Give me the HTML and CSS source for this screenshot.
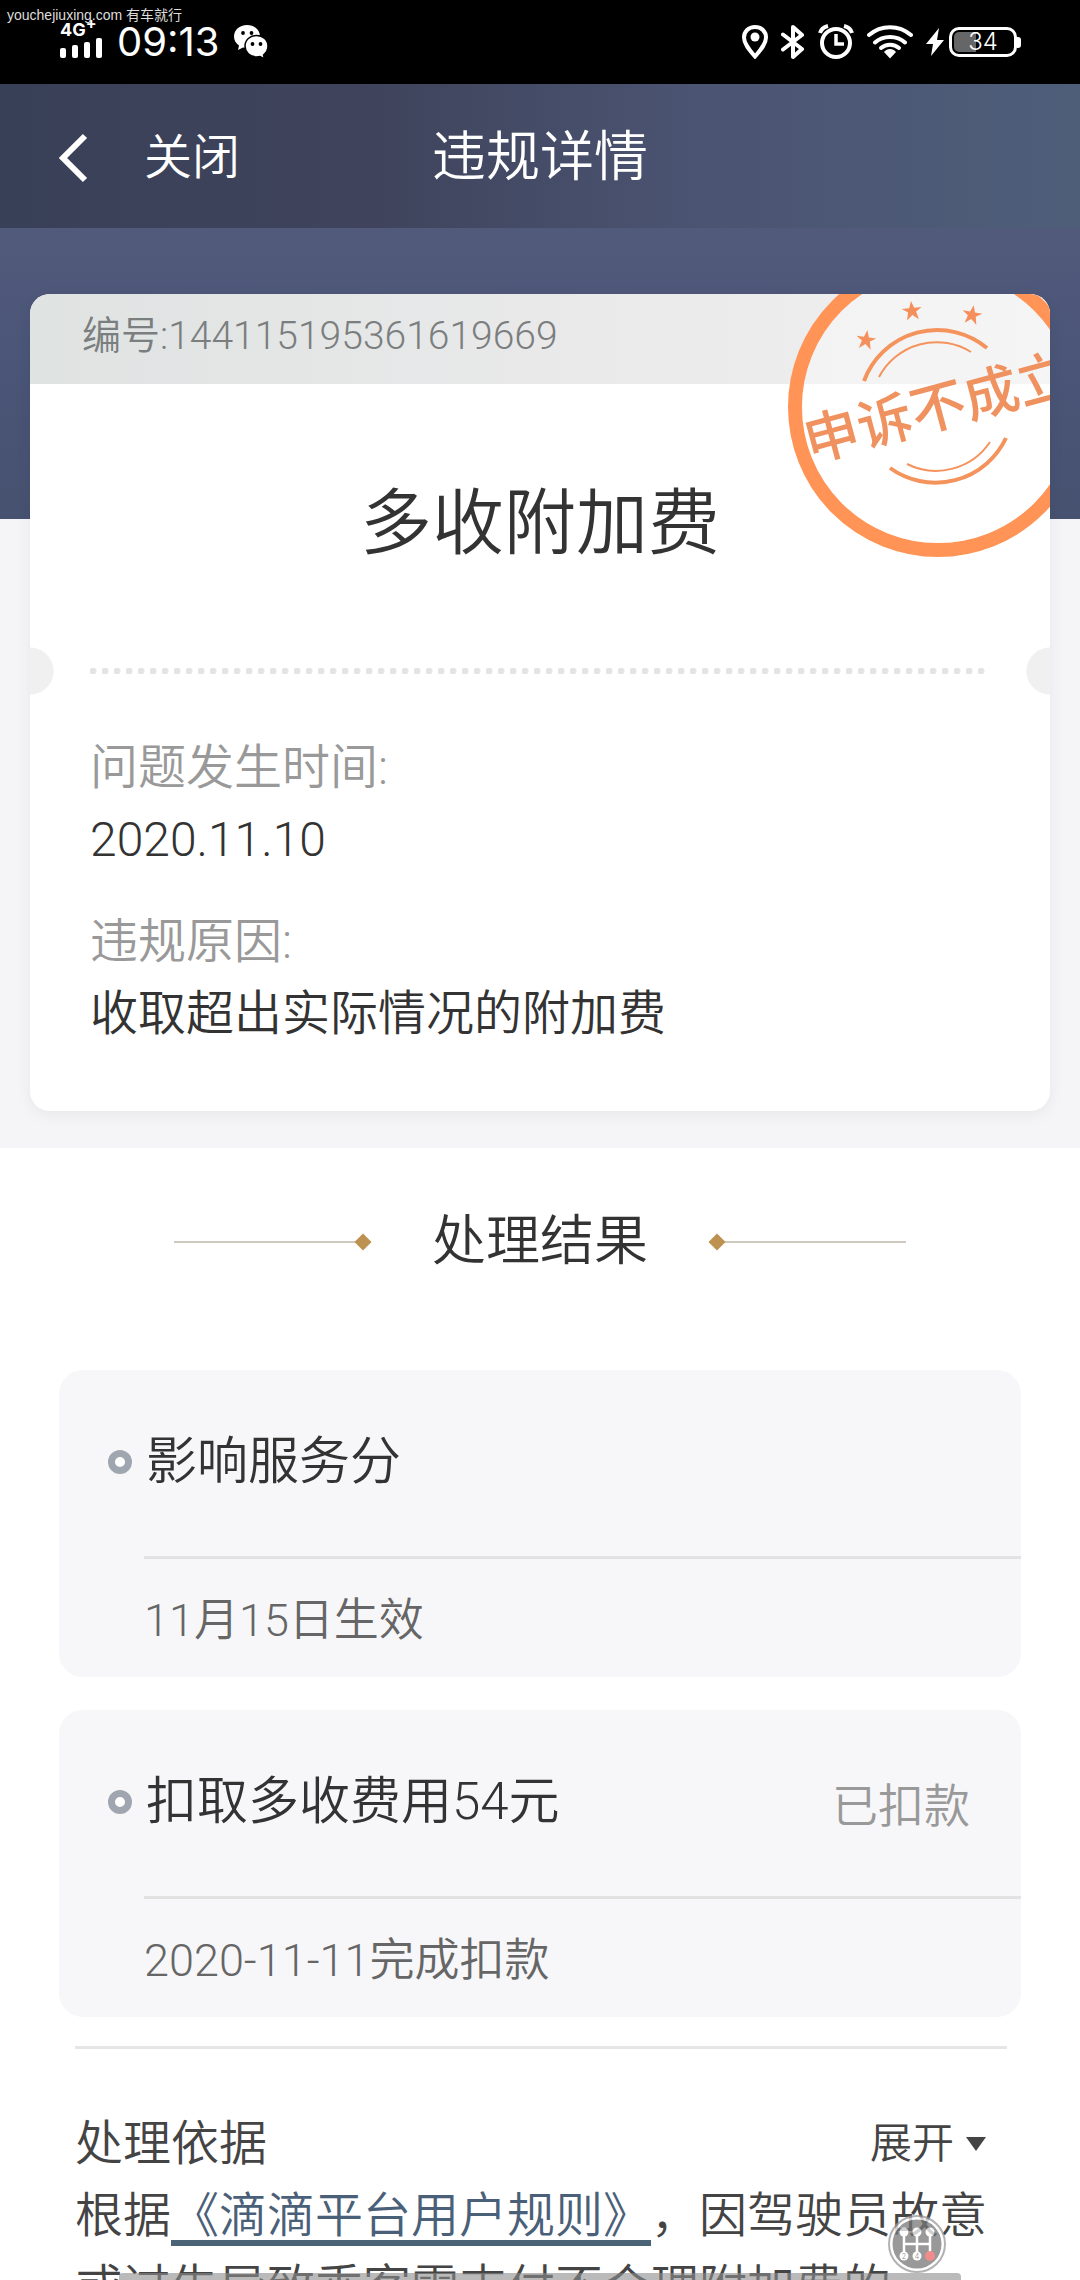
FILE: index.html
```html
<!DOCTYPE html>
<html lang="zh-CN">
<head>
<meta charset="utf-8">
<meta name="viewport" content="width=device-width, initial-scale=1">
<title>违规详情</title>
<link rel="stylesheet" href="styles.css">
</head>
<body>
<div class="screen">
  <div class="watermark">youchejiuxing.com 有车就行</div>
  <div class="status">
    <div class="status-group">
      <div class="signal">
        <span class="network">4G<sup>+</sup></span>
        <svg width="43" height="20" viewBox="0 0 43 20" fill="#fff" aria-hidden="true"><rect y="10" width="6" height="10" rx="2"/><rect x="12" y="7" width="6" height="13" rx="2"/><rect x="24" y="4" width="6" height="16" rx="2"/><rect x="36" width="6" height="20" rx="2"/></svg>
      </div>
      <time class="clock">09:13</time>
      <svg width="34" height="34" viewBox="0 0 34 34" aria-hidden="true"><path d="M13 0C5.500 0 0 5 0 11.500c0 4 2 7 5 9L4 25l5-2.500 4 .8c7 0 13-5 13-11.800S20 0 13 0z" fill="#fff"/><circle cx="9" cy="8" r="1.900"/><circle cx="17.500" cy="8" r="1.900"/><path d="M22.500 10.500C16 10.500 11 15 11 21s5 11 11.500 11l3.500-.5 4.500 2.500-1-4c2.500-2 4.500-5 4.500-9 0-6-5-10.500-11.500-10.500z" fill="#fff" stroke="#000" stroke-width="1.500"/><circle cx="18.500" cy="19" r="1.900"/><circle cx="26.500" cy="19" r="1.900"/></svg>
    </div>
    <div class="status-group status-right">
      <svg width="26" height="34" viewBox="0 0 26 34" aria-hidden="true"><path d="M13 2C6.500 2 2 6.500 2 12.500 2 19 7.500 25 13 31.500 18.500 25 24 19 24 12.500 24 6.500 19.500 2 13 2z" fill="none" stroke="#fff" stroke-width="4"/><circle cx="13" cy="12" r="4.500" fill="#fff"/></svg>
      <svg width="24" height="36" viewBox="0 0 24 36" fill="none" stroke="#fff" stroke-width="4" stroke-linejoin="round" stroke-linecap="round" aria-hidden="true"><path d="M2 10.500L21 25l-9 8V3l9 8L2 25.500"/></svg>
      <svg width="36" height="36" viewBox="0 0 36 36" fill="none" stroke="#fff" stroke-width="4" aria-hidden="true"><circle cx="18" cy="19" r="14"/><path d="M18 10v10h8" stroke-width="3.500"/><path d="M2 9c1-3.500 4-6 8-7M34 9c-1-3.500-4-6-8-7"/></svg>
      <svg width="46" height="34" viewBox="0 0 46 34" fill="none" stroke="#fff" stroke-width="4" stroke-linecap="round" aria-hidden="true"><path d="M2 10C14-.5 32-.5 44 10M8 17.500c8-7.500 22-7.500 30 0"/><path d="M14 23c5-4.500 13-4.500 18 0"/><path d="M17 27c3-4 9-4 12 0l-6 6.500z" fill="#fff" stroke="none"/></svg>
      <svg class="bolt" width="18" height="28" viewBox="0 0 18 28" fill="#fff" aria-hidden="true"><path d="M13 0L0 16h7L5 28l13-16h-7z"/></svg>
      <div class="battery"><span class="battery-level">34</span></div>
    </div>
  </div>

  <header class="nav">
    <div class="nav-actions">
      <button class="back" type="button" aria-label="返回"><svg width="30" height="50" viewBox="0 0 30 50" fill="none" stroke="#fff" stroke-width="6" aria-hidden="true"><path d="M27 3L5 25l22 22"/></svg></button>
      <button class="close" type="button">关闭</button>
    </div>
    <h1 class="nav-title">违规详情</h1>
  </header>

  <main>
    <section class="hero">
      <article class="ticket">
        <div class="ticket-number">编号:144115195361619669</div>
        <svg class="stamp" width="302" height="302" viewBox="787 256 302 302" aria-hidden="true">
          <circle cx="938" cy="407" r="143" fill="none" stroke="#ff9456" stroke-width="14"/>
          <circle cx="938" cy="407" r="136" fill="#fff" fill-opacity=".35"/>
          <g fill="none" stroke="#f5935c" stroke-width="4">
            <path d="M864 381A78 78 0 0 1 987 348M890 468A78 78 0 0 0 1006 438"/>
            <path d="M879 377A65 65 0 0 1 971 352M907 464A65 65 0 0 0 990 442" stroke-width="2"/>
          </g>
          <g fill="#f5905c">
            <path transform="translate(866 340) rotate(8)" d="M0-10l2.500 7H10L4 1l2 8-6-5-6 5 2-8-6-4h7.500z"/>
            <path transform="translate(912 311) rotate(-6)" d="M0-10l2.500 7H10L4 1l2 8-6-5-6 5 2-8-6-4h7.500z"/>
            <path transform="translate(972 315) rotate(10)" d="M0-10l2.500 7H10L4 1l2 8-6-5-6 5 2-8-6-4h7.500z"/>
          </g>
          <text class="stamp-text" x="938" y="427" text-anchor="middle" transform="rotate(-15 938 407)">申诉不成立</text>
        </svg>
        <h2 class="ticket-title">多收附加费</h2>
        <div class="perforation"><span class="dots"></span></div>
        <dl class="details">
          <div><dt>问题发生时间:</dt><dd>2020.11.10</dd></div>
          <div><dt>违规原因:</dt><dd>收取超出实际情况的附加费</dd></div>
        </dl>
      </article>
    </section>

    <section class="results">
      <div class="section-heading">
        <span class="rule rule-left"></span>
        <h2>处理结果</h2>
        <span class="rule rule-right"></span>
      </div>
      <ul class="result-list">
        <li class="result">
          <div class="result-head"><span class="ring"></span><h3>影响服务分</h3></div>
          <p class="result-note">11月15日生效</p>
        </li>
        <li class="result">
          <div class="result-head"><span class="ring"></span><h3>扣取多收费用54元</h3><span class="result-state">已扣款</span></div>
          <p class="result-note">2020-11-11完成扣款</p>
        </li>
      </ul>
    </section>

    <section class="basis">
      <div class="basis-head">
        <h2>处理依据</h2>
        <button class="expand" type="button">展开<svg width="20" height="14" viewBox="0 0 20 14" fill="#444" aria-hidden="true"><path d="M0 0h20L10 14z"/></svg></button>
      </div>
      <p class="basis-text">根据<a href="#rules">《滴滴平台用户规则》</a>，因驾驶员故意或过失导致乘客需支付不合理附加费的</p>
    </section>
  </main>

  <div class="gear-badge">
    <svg width="60" height="60" viewBox="0 0 60 60" aria-hidden="true"><circle cx="30" cy="30" r="28" fill="#fff" stroke="#999" stroke-width="2"/><circle cx="30" cy="30" r="24.500" fill="#777"/><path d="M17 20v19M30 20v19M43 20v19M17 30h26" fill="none" stroke="#fff" stroke-width="2.500"/><g fill="#fff"><circle cx="17" cy="18" r="4.500"/><circle cx="30" cy="18" r="4.500"/><circle cx="43" cy="18" r="4.500"/><circle cx="17" cy="42" r="4.500"/><circle cx="30" cy="42" r="4.500"/></g><circle cx="43" cy="42" r="5" fill="#e66"/><g font-family="Inter, sans-serif" font-size="7" text-anchor="middle" fill="#666"><text x="17" y="45">2</text><text x="30" y="45">4</text></g></svg>
  </div>
  <div class="gesture-bar"></div>
</div>
</body>
</html>
```

FILE: styles.css
```css
* { box-sizing: border-box; }

body {
  margin: 0;
  background: #fff;
  color: #333;
  font-family: Roboto, "Noto Sans CJK SC", sans-serif;
  font-weight: 350;
  text-spacing-trim: space-all;
}

h1, h2, h3, p, dl, dd, ul { margin: 0; padding: 0; font-weight: inherit; }
button { border: 0; padding: 0; background: none; color: inherit; font: inherit; }
svg { display: block; }

.screen { position: relative; height: 100vh; overflow: hidden; }

.watermark {
  position: absolute;
  left: 7px;
  top: 5px;
  color: #ddd;
  font: 14px/20px "Liberation Sans", "Noto Sans CJK SC", sans-serif;
}

/* Phone status bar */
.status {
  display: flex;
  justify-content: space-between;
  height: 84px;
  padding: 0 63px 0 60px;
  background: #000;
  color: #fff;
  font-family: Inter, sans-serif;
}
.status-group { display: flex; align-items: center; gap: 14px; }
.signal { margin-bottom: 4px; }
.network { display: block; height: 16px; font-size: 18px; font-weight: 700; line-height: 16px; }
.network sup { font-size: 16px; line-height: 0; }
.clock { font-size: 40px; line-height: 88px; font-weight: 400; }
.status-right { gap: 13px; }
.bolt { margin-right: -8px; }
.battery {
  position: relative;
  width: 68px;
  height: 30px;
  border: 3px solid #fff;
  border-radius: 10px;
  background: linear-gradient(90deg, #666 22px, #000 22px) content-box;
  padding: 2px;
  font-size: 24px;
  line-height: 20px;
  text-align: center;
}
.battery::after {
  content: "";
  position: absolute;
  right: -7px;
  top: 7px;
  width: 4px;
  height: 11px;
  border-radius: 0 3px 3px 0;
  background: #fff;
}

/* Title bar */
.nav {
  display: grid;
  grid-template-columns: 1fr auto 1fr;
  align-items: center;
  height: 144px;
  padding: 4px 58px 0;
  background: linear-gradient(90deg, #384058, #3f445c 35%, #4b5472 65%, #4e5e79);
  color: #fff;
}
.nav-actions { display: flex; align-items: center; gap: 56px; }
.close { font-size: 48px; line-height: 72px; }
.nav-title { grid-column: 2; font-size: 54px; line-height: 80px; }

/* Violation ticket */
.hero {
  padding: 66px 30px 37px;
  background: linear-gradient(#525a7b, #4a5577 50%, #475170) 0 0 / 100% 291px no-repeat #f5f5f7;
}
.ticket {
  position: relative;
  overflow: hidden;
  border-radius: 20px;
  background: #fff;
  box-shadow: 0 4px 16px rgba(0, 0, 0, .06);
}
.ticket-number {
  height: 90px;
  padding-left: 52px;
  background: linear-gradient(90deg, #dfe3e2, #e9e9ea 50%, #f0f0f1);
  color: #7b7e7e;
  font-size: 39px;
  line-height: 84px;
}
.stamp { position: absolute; right: -39px; top: -38px; }
.stamp-text { fill: #ef925f; font-size: 55px; font-weight: 500; }
.ticket-title {
  padding: 100px 0 83px;
  font-size: 72px;
  line-height: 80px;
  text-align: center;
}
.perforation {
  display: flex;
  align-items: center;
  height: 48px;
  padding: 0 60px;
  background:
    radial-gradient(circle at 0 50%, #f0f0f1 23px, transparent 24px),
    radial-gradient(circle at 100% 50%, #f0f0f1 23px, transparent 24px);
}
.dots {
  flex: 1;
  height: 6px;
  background: radial-gradient(circle at 3px 3px, #e4e4e4 3px, transparent 4px) 0 0 / 12px 6px;
}
.details {
  display: grid;
  gap: 30px;
  padding: 37px 60px 61px;
  font-size: 48px;
  line-height: 72px;
}
.details dt { color: #999; }

/* Outcome list */
.results { padding: 54px 59px 0; }
.section-heading {
  display: flex;
  justify-content: center;
  align-items: center;
  gap: 61px;
  margin-bottom: 88px;
}
.section-heading h2 { font-size: 54px; line-height: 80px; }
.rule { position: relative; width: 197px; height: 2px; background: #cfcabd; }
.rule::after {
  content: "";
  position: absolute;
  top: -5px;
  width: 12px;
  height: 12px;
  background: #bd9150;
  transform: rotate(45deg);
}
.rule-left::after { right: 2px; }
.rule-right::after { left: 2px; }

.result-list { display: grid; gap: 33px; list-style: none; }
.result { border-radius: 24px; background: #f7f7f9; }
.result-head {
  display: flex;
  align-items: center;
  padding: 56px 51px 58px 49px;
}
.ring {
  width: 24px;
  height: 24px;
  margin-right: 14px;
  border: 7px solid #9fa6af;
  border-radius: 50%;
  background: #fff;
}
.result h3 { font-size: 51px; line-height: 72px; }
.result-state { margin-left: auto; color: #999; font-size: 46px; }
.result-note {
  margin-left: 85px;
  border-top: 3px solid #e2e2e2;
  padding-top: 6px;
  color: #666;
  font-size: 45px;
  line-height: 112px;
}

/* Rule the decision rests on */
.basis {
  margin: 29px 73px 0 75px;
  border-top: 3px solid #e6e6e4;
  padding-top: 59px;
  color: #444;
  font-size: 48px;
  line-height: 72px;
}
.basis-head { display: flex; justify-content: space-between; padding-right: 21px; }
.basis h2 { font-size: 48px; }
.expand { display: flex; align-items: center; gap: 12px; font-size: 42px; }
.basis-text a {
  color: #4a6078;
  text-decoration: underline 6px #4a6375;
  text-underline-offset: 8px;
  text-decoration-skip-ink: none;
}

.gear-badge { position: absolute; right: 133px; bottom: 6px; opacity: .75; }
.gesture-bar {
  position: absolute;
  left: 11%;
  right: 11%;
  bottom: 0;
  height: 7px;
  border-radius: 4px 4px 0 0;
  background: rgba(140, 140, 140, .6);
}
```
